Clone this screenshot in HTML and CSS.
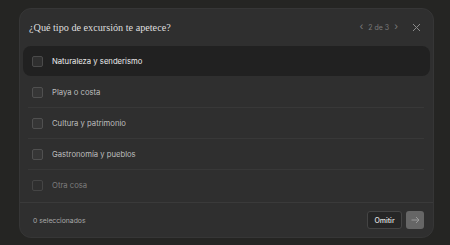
FILE: index.html
```html
<!DOCTYPE html>
<html lang="es">

<head>
    <meta charset="UTF-8">
    <meta name="viewport" content="width=device-width, initial-scale=1.0">
    <title>Excursión</title>
    <link rel="stylesheet" href="styles.css">
</head>

<body>

    <div class="card">
        <!-- Header -->
        <div class="card-header">
            <h1 class="title">¿Qué tipo de excursión te apetece?</h1>
            <div class="pager">
                <span class="chev">&#8249;</span>
                <span class="count">2 de 3</span>
                <span class="chev">&#8250;</span>
            </div>
            <button class="close" aria-label="Cerrar">
                <svg width="9" height="9" viewBox="0 0 9 9">
                    <path d="M1 1 L8 8 M8 1 L1 8" stroke="#8a8a8a" stroke-width="1" fill="none" />
                </svg>
            </button>
        </div>

        <!-- Options -->
        <div class="options">
            <div class="opt selected">
                <span class="box"></span>
                <span class="label">Naturaleza y senderismo</span>
            </div>
            <div class="gap"></div>
            <div class="opt">
                <span class="box"></span>
                <span class="label">Playa o costa</span>
            </div>
            <div class="sep"></div>
            <div class="opt">
                <span class="box"></span>
                <span class="label">Cultura y patrimonio</span>
            </div>
            <div class="sep"></div>
            <div class="opt">
                <span class="box"></span>
                <span class="label">Gastronomía y pueblos</span>
            </div>
            <div class="sep"></div>
            <div class="opt muted">
                <span class="box"></span>
                <span class="label">Otra cosa</span>
            </div>
        </div>

        <!-- Footer -->
        <div class="card-footer">
            <span class="selected-count">0 seleccionados</span>
            <div class="actions">
                <button class="skip">Omitir</button>
                <button class="next" aria-label="Siguiente">
                    <svg width="9" height="8" viewBox="0 0 9 8">
                        <path d="M0.5 4 H8 M5 1 L8 4 L5 7" stroke="#9a9a9a" stroke-width="1" fill="none" />
                    </svg>
                </button>
            </div>
        </div>
    </div>

</body>

</html>
```

FILE: styles.css
```css
body {
    margin: 0;
    padding: 8px 0 0 19px;
    background-color: #252523;
    font-family: 'Inter', 'Noto Sans', sans-serif;
}

.card {
    width: 413px;
    height: 228px;
    background-color: #2f2f2f;
    border: 1px solid #363636;
    border-radius: 12px;
    display: flex;
    flex-direction: column;
    box-sizing: content-box;
}

.card-header {
    height: 36px;
    display: flex;
    align-items: center;
    padding: 0 12px 0 9px;
}

.title {
    flex: 1;
    margin: 0;
    font-family: 'Liberation Serif', serif;
    font-weight: normal;
    font-size: 10.2px;
    color: #dedede;
}

.pager {
    display: flex;
    align-items: center;
    gap: 5px;
    color: #7a7a7a;
    font-size: 7px;
    margin-right: 14px;
}

.chev {
    font-size: 10px;
    line-height: 1;
    position: relative;
    top: -1px;
}

.close {
    background: none;
    border: none;
    padding: 0;
    width: 9px;
    height: 9px;
    display: flex;
}

.options {
    padding: 1px 3px 2px;
    display: flex;
    flex-direction: column;
}

.opt {
    height: 30px;
    display: flex;
    align-items: center;
    gap: 9px;
    padding-left: 9px;
    border-radius: 8px;
    color: #bdbdbd;
    font-size: 7.7px;
}

.opt.selected {
    background-color: #212121;
    color: #ececec;
}

.opt.muted {
    color: #7d7d7d;
}

.box {
    width: 9px;
    height: 9px;
    border: 1px solid #505050;
    border-radius: 2px;
    background-color: #363636;
}

.opt.selected .box {
    background-color: #2f2f2f;
    border-color: #4a4a4a;
}

.opt.muted .box {
    background-color: transparent;
    border-color: #454545;
}

.gap {
    height: 1px;
}

.sep {
    height: 1px;
    margin: 0 6px 0 5px;
    background-color: #383838;
}

.card-footer {
    flex: 1;
    border-top: 1px solid #3a3a3a;
    display: flex;
    align-items: center;
    justify-content: space-between;
    padding: 0 9px 0 13px;
}

.selected-count {
    color: #a8a8a8;
    font-size: 6.8px;
}

.actions {
    display: flex;
    gap: 4px;
}

.skip {
    height: 18px;
    width: 35px;
    padding: 0;
    background-color: #262626;
    border: 1px solid #444;
    border-radius: 3px;
    color: #e0e0e0;
    font-family: 'Inter', sans-serif;
    font-size: 7px;
    font-weight: 500;
}

.next {
    height: 18px;
    width: 18px;
    padding: 0;
    background-color: #666666;
    border: none;
    border-radius: 3px;
    display: flex;
    align-items: center;
    justify-content: center;
}
```
